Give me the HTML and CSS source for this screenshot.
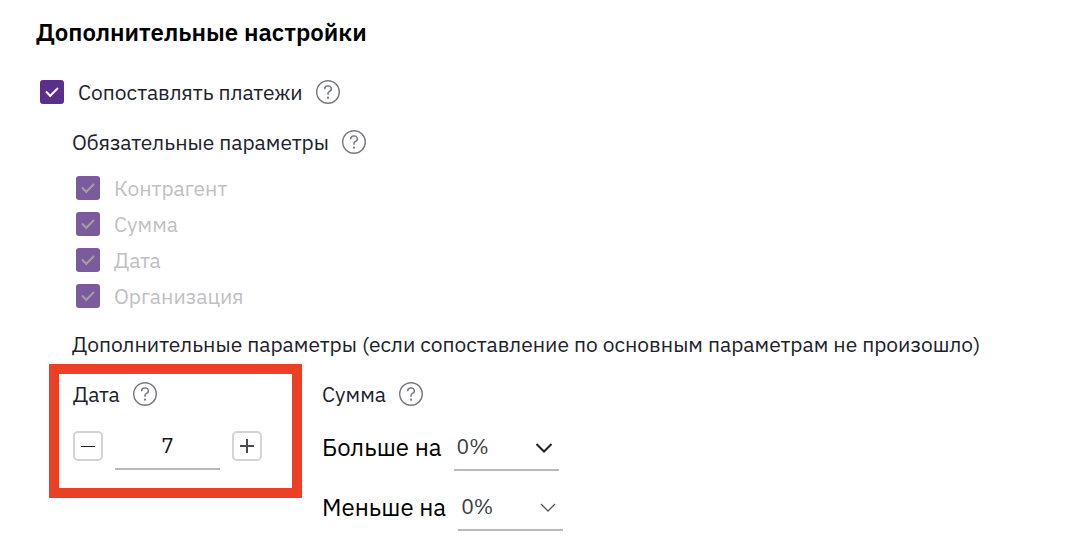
FILE: index.html
```
<!DOCTYPE html>
<html lang="ru">
<head>
  <meta charset="UTF-8">
  <meta name="viewport" content="width=device-width, initial-scale=1.0">
  <title>Дополнительные настройки</title>
  <link rel="stylesheet" href="styles.css">
</head>
<body>
  <!-- shared help icon -->
  <svg class="sprite" width="0" height="0" aria-hidden="true">
    <symbol id="help" viewBox="0 0 24 24">
      <circle cx="12" cy="12" r="11.3" fill="none" stroke="currentColor" stroke-width="1.4"/>
      <path d="M8.700 9.300V8.800a2.700 2.700 0 0 1 2.700-2.700h1.200a2.700 2.700 0 0 1 1.300 5.100L12.900 11.800A1.700 1.700 0 0 0 12 13.300V14.700" fill="none" stroke="currentColor" stroke-width="1.500"/>
      <circle cx="12" cy="17.700" r="1.100" fill="currentColor"/>
    </symbol>
  </svg>

  <main class="settings">
    <h2>Дополнительные настройки</h2>

    <div class="row match">
      <input type="checkbox" id="matchPayments" checked>
      <label for="matchPayments">Сопоставлять платежи</label>
      <svg class="help"><use href="#help"/></svg>
    </div>

    <div class="row required-title">
      <span>Обязательные параметры</span>
      <svg class="help"><use href="#help"/></svg>
    </div>

    <div class="required">
      <div class="row">
        <input type="checkbox" id="partner" checked disabled>
        <label for="partner">Контрагент</label>
      </div>
      <div class="row">
        <input type="checkbox" id="amount" checked disabled>
        <label for="amount">Сумма</label>
      </div>
      <div class="row">
        <input type="checkbox" id="date" checked disabled>
        <label for="date">Дата</label>
      </div>
      <div class="row">
        <input type="checkbox" id="company" checked disabled>
        <label for="company">Организация</label>
      </div>
    </div>

    <p class="extra-title">Дополнительные параметры (если сопоставление по основным параметрам не произошло)</p>

    <div class="extra">
      <div class="date-box">
        <div class="row">
          <label for="days">Дата</label>
          <svg class="help"><use href="#help"/></svg>
        </div>
        <div class="stepper">
          <button type="button" id="minus" aria-label="Уменьшить">
            <svg width="14" height="14" viewBox="0 0 14 14"><path d="M0 7.500h14"/></svg>
          </button>
          <input type="text" id="days" inputmode="numeric" value="7">
          <button type="button" id="plus" aria-label="Увеличить">
            <svg width="14" height="14" viewBox="0 0 14 14"><path d="M0 7h14M7 0v14"/></svg>
          </button>
        </div>
      </div>

      <div class="sum-box">
        <div class="row">
          <span>Сумма</span>
          <svg class="help"><use href="#help"/></svg>
        </div>
        <div class="field">
          <label for="more">Больше на</label>
          <div class="select active">
            <select id="more">
              <option>0%</option>
              <option>5%</option>
              <option>10%</option>
            </select>
            <svg viewBox="0 0 16 10"><path d="M0.500 1L8 8.500 15.500 1"/></svg>
          </div>
        </div>
        <div class="field">
          <label for="less">Меньше на</label>
          <div class="select">
            <select id="less">
              <option>0%</option>
              <option>5%</option>
              <option>10%</option>
            </select>
            <svg viewBox="0 0 16 10"><path d="M1 1l7 7 7-7"/></svg>
          </div>
        </div>
      </div>
    </div>
  </main>

  <script>
    const days = document.getElementById('days');

    function step(delta) {
      const value = parseInt(days.value, 10) || 0;
      days.value = Math.max(0, value + delta);
    }

    document.getElementById('minus').addEventListener('click', () => step(-1));
    document.getElementById('plus').addEventListener('click', () => step(1));
  </script>
</body>
</html>
```
FILE: styles.css
```
body {
  margin: 0;
  background: #fff;
  color: #20212b;
  font-family: "IBM Plex Sans", "Noto Sans", sans-serif;
  font-size: 21px;
  line-height: 24px;
}

.sprite {
  position: absolute;
}

.settings {
  padding: 12px 36px;
}

h2 {
  margin: 0;
  font-size: 24px;
  line-height: 40px;
  font-weight: 600;
  color: #000;
}

.row {
  display: flex;
  align-items: center;
}

.match {
  margin: 28px 0 0 4px;
}

.required-title {
  margin: 26px 0 0 36px;
}

.required {
  display: flex;
  flex-direction: column;
  gap: 12px;
  margin: 22px 0 0 40px;
}

.help {
  width: 24px;
  height: 24px;
  margin-left: 13px;
  color: #777883;
}

input[type="checkbox"] {
  appearance: none;
  width: 24px;
  height: 24px;
  margin: 0 14px 0 0;
  border-radius: 3px;
  background: #5b2e8a;
  display: grid;
  place-items: center;
}

input[type="checkbox"]::before {
  content: "";
  width: 10px;
  height: 5px;
  border-left: 2px solid #fff;
  border-bottom: 2px solid #fff;
  transform: translateY(-2px) rotate(-45deg);
}

input[type="checkbox"]:disabled {
  background: #7b5a9d;
}

input[type="checkbox"]:disabled::before {
  border-color: #a3a09f;
}

input[type="checkbox"]:disabled + label {
  color: #bfbfc4;
}

.extra-title {
  margin: 24px 0 8px 36px;
}

.extra {
  display: flex;
  align-items: flex-start;
  gap: 20px;
  margin-left: 13px;
}

.date-box {
  border: 10px solid #eb4026;
  padding: 8px 30px 18px 14px;
}

.stepper {
  display: flex;
  align-items: center;
  gap: 12px;
  margin-top: 16px;
}

.stepper button {
  display: grid;
  place-items: center;
  width: 30px;
  height: 30px;
  padding: 0;
  border: 2px solid #d4d4d6;
  border-radius: 5px;
  background: #fff;
  cursor: pointer;
}

.stepper svg {
  fill: none;
  stroke: #4a4b57;
  stroke-width: 2;
}

#minus svg {
  stroke: #20212b;
  stroke-width: 1;
}

.stepper input {
  box-sizing: border-box;
  width: 105px;
  height: 48px;
  padding: 0;
  border: 0;
  border-bottom: 2px solid #b9b9bd;
  background: none;
  color: #16161a;
  font: inherit;
  text-align: center;
}

.sum-box {
  padding-top: 18px;
}

.field {
  display: flex;
  align-items: center;
  gap: 12px;
  margin-top: 12px;
}

.row + .field {
  margin-top: 17px;
}

.field label {
  font-size: 24px;
  color: #000;
}

.select {
  position: relative;
  width: 105px;
}

.select select {
  appearance: none;
  display: block;
  box-sizing: border-box;
  width: 100%;
  height: 48px;
  padding: 0 3px;
  border: 0;
  border-bottom: 2px solid #b9b9bd;
  border-radius: 0;
  background: none;
  color: #3c3c40;
  font: inherit;
}

.select svg {
  position: absolute;
  right: 7px;
  top: 20px;
  width: 16px;
  height: 10px;
  fill: none;
  stroke: #55565f;
  stroke-width: 1.3;
  pointer-events: none;
}

.select.active svg {
  stroke: #20212b;
  stroke-width: 2;
}
```
